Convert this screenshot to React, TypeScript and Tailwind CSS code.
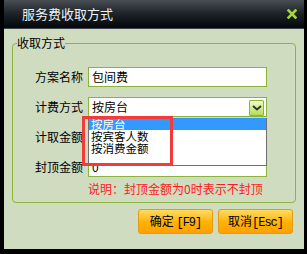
import React from 'react';

const rows = [
  { label: '方案名称', value: '包间费' },
  { label: '计费方式', value: '按房台', select: true },
  { label: '计取金额', value: '' },
  { label: '封顶金额', value: '0' },
];

const options = ['按房台', '按宾客人数', '按消费金额'];

function CloseIcon() {
  return (
    <svg width="10" height="10" viewBox="0 0 10 10" aria-hidden="true">
      <path d="M1.5 1.5 L8.5 8.5 M8.5 1.5 L1.5 8.5" stroke="#a6d63a" strokeWidth="2.6" strokeLinecap="square" />
    </svg>
  );
}

function Chevron() {
  return (
    <svg width="10" height="6" viewBox="0 0 10 6" aria-hidden="true">
      <path d="M1 1 L5 4.5 L9 1" stroke="#333" strokeWidth="2" fill="none" />
    </svg>
  );
}

export default function App() {
  return (
    <div className="w-[307px] h-[254px] bg-black pl-[4px] pr-[3px] pb-[5px] flex flex-col font-['Noto_Sans_CJK_SC',sans-serif] text-[12px] leading-[14px] text-black">
      <div className="h-[29px] shrink-0 flex items-center justify-between pl-[18px] pr-[7px] bg-linear-to-b from-[#4a4f55] via-[#1d2227] to-[#05080a] border-b border-[#3e4347]">
        <span className="text-[13px] text-[#eef2f6]">服务费收取方式</span>
        <CloseIcon />
      </div>

      <div className="flex-1 bg-[#d0dcc0] pt-[7px]">
        <fieldset className="ml-[8px] w-[284px] min-w-0 border border-[#8cb43c] rounded-[4px] px-[4px] pb-[6px]">
          <legend className="px-0 text-[12px] leading-[14px]">收取方式</legend>
          <div className="pl-[18px] pt-[17px] flex flex-col gap-[10px]">
            {rows.map((r) => (
              <div key={r.label} className="flex items-center h-[20px]">
                <span className="w-[53px] shrink-0">{r.label}</span>
                <div className="relative w-[179px] h-[20px] bg-white border border-[#8cb43c] flex items-center pl-[3px]">
                  <span>{r.value}</span>
                  {r.select && (
                    <>
                      <div className="absolute right-[2px] top-[2px] w-[15px] h-[16px] rounded-[1px] border border-[#8cb43c] bg-linear-to-b from-[#f2fcc0] to-[#b2de52] flex items-center justify-center">
                        <Chevron />
                      </div>
                      <div className="absolute left-[-1px] top-[20px] w-[179px] h-[48px] bg-white border border-[#707070] border-t-0 z-10 text-[11.5px]">
                        {options.map((o, i) => (
                          <div
                            key={o}
                            className={
                              i === 0
                                ? 'h-[12px] leading-[11px] pl-[1px] bg-[#3399ff] text-white border border-dotted border-[#b07a3a]'
                                : 'h-[12px] leading-[12px] pl-[2px]'
                            }
                          >
                            {o}
                          </div>
                        ))}
                      </div>
                      <div className="absolute left-[-7px] top-[18px] w-[91px] h-[50px] border-[3px] border-[#f23c3c] z-20" />
                    </>
                  )}
                </div>
              </div>
            ))}
            <div className="pl-[53px] mt-[-5px] text-[#ff1a1a]">说明：封顶金额为0时表示不封顶</div>
          </div>
        </fieldset>

        <div className="flex justify-end gap-[5px] pr-[11px] mt-[6px]">
          <button className="w-[75px] h-[25px] rounded-[3px] border border-[#e89a10] bg-linear-to-b from-[#ffdc5a] via-[#ffb400] to-[#ffa000] text-[12px] pt-[1px]">
            确定 <span className="font-['Liberation_Mono',monospace] tracking-[-1px]">[F9]</span>
          </button>
          <button className="w-[75px] h-[25px] rounded-[3px] border border-[#e89a10] bg-linear-to-b from-[#ffdc5a] via-[#ffb400] to-[#ffa000] text-[12px] pt-[1px]">
            取消<span className="font-['Liberation_Mono',monospace] tracking-[-1px]">[Esc]</span>
          </button>
        </div>
      </div>
    </div>
  );
}
